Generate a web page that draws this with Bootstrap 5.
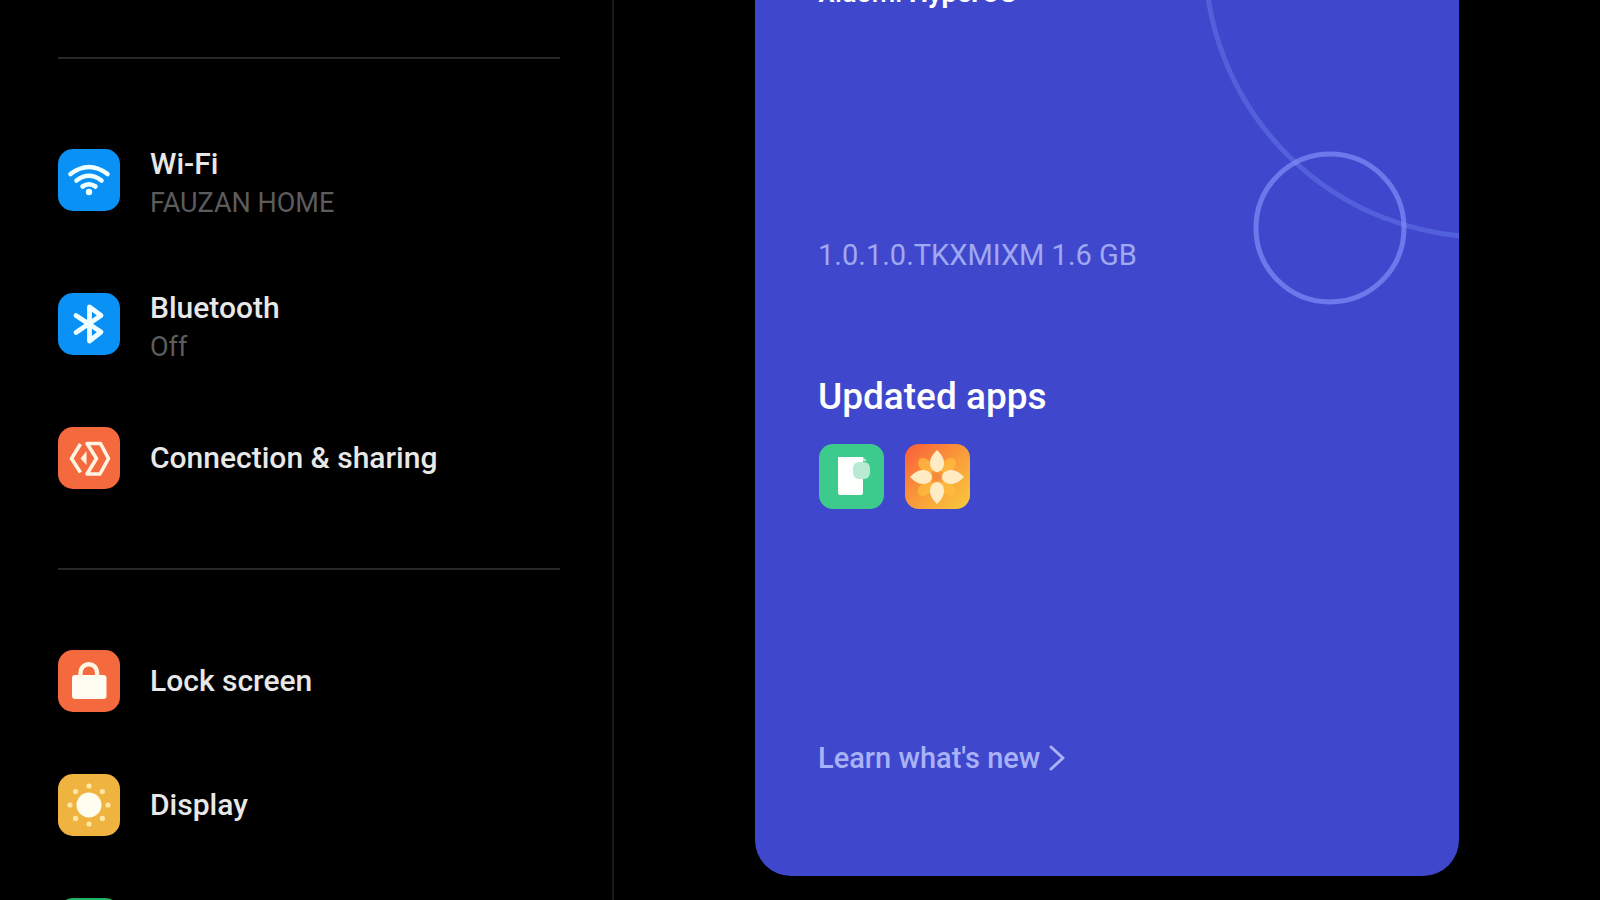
<!DOCTYPE html>
<html lang="en">
<head>
<meta charset="utf-8">
<meta name="viewport" content="width=device-width, initial-scale=1">
<title>Settings</title>
<link href="https://cdn.jsdelivr.net/npm/bootstrap@5.3.0/dist/css/bootstrap.min.css" rel="stylesheet">
<style>
  body { background: #000; font-family: Roboto, "Liberation Sans", sans-serif; }
  .settings-page { display: grid; grid-template-columns: 307fr 493fr; height: 100vh; overflow: hidden; }
  .side-menu { border-right: 2px solid #191919; padding: 57px 52px 0 58px; min-width: 0; }
  .menu-rule { margin: 0; border: 0; height: 2px; background: #272727; opacity: 1; }
  .menu-group { padding: 49px 0 48px; }
  .menu-item { gap: 30px; padding: 31px 0; color: #e8e8e8; font-size: 30px; font-weight: 500; line-height: 42px; text-decoration: none; }
  .menu-item svg { width: 62px; height: 62px; flex: none; }
  .menu-note { color: #5c5c5c; font-size: 27px; font-weight: 400; line-height: 36px; }
  .two-line { padding-top: 4px; }
  .detail-pane { padding: 0 141px 24px; min-width: 0; }
  .update-card { background: #3f48cc; border-radius: 0 0 36px 36px; padding: 0 63px 100px; color: #fff; overflow: hidden; }
  .rings { top: 0; right: 0; width: 260px; height: 320px; }
  .os-name { font-size: 27px; line-height: 36px; font-weight: 500; margin: -25px 0 226px; }
  .os-name b { font-weight: 700; }
  .build { color: #a0a8f2; font-size: 29px; line-height: 36px; margin: 0 0 101px; }
  .apps-title { font-size: 37px; line-height: 46px; font-weight: 500; margin: 0 0 24px; }
  .app-list { gap: 20px; margin-bottom: 230px; }
  .app-list svg { width: 66px; height: 66px; }
  .news-link { color: #a9b2f6; font-size: 29px; line-height: 36px; font-weight: 500; gap: 8px; }
  .news-link svg { width: 18px; height: 28px; }
</style>
</head>
<body>
<div class="settings-page">
  <nav class="side-menu" aria-label="Settings">
    <hr class="menu-rule">
    <div class="menu-group">
      <a class="menu-item d-flex align-items-center" href="#wifi">
        <svg viewBox="0 0 62 62" aria-hidden="true"><rect width="62" height="62" rx="15" fill="#0a91f5"/>
          <g fill="none" stroke="#f0ffff" stroke-width="4.6" stroke-linecap="round"><path d="M12.5 25Q31 11 49.500 25"/><path d="M18.500 31.500Q31 22 43.500 31.500"/><path d="M24.500 37.500Q31 33 37.500 37.500"/></g>
          <circle cx="31" cy="43" r="3.200" fill="#f0ffff"/></svg>
        <span class="two-line"><span class="d-block">Wi-Fi</span><span class="menu-note d-block">FAUZAN HOME</span></span>
      </a>
      <a class="menu-item d-flex align-items-center" href="#bluetooth">
        <svg viewBox="0 0 62 62" aria-hidden="true"><rect width="62" height="62" rx="15" fill="#0a91f5"/>
          <path d="M18 22.500L43 39 31.500 48V14L43 22.500 18 39.500" fill="none" stroke="#f0ffff" stroke-width="4.800" stroke-linecap="round" stroke-linejoin="round"/></svg>
        <span class="two-line"><span class="d-block">Bluetooth</span><span class="menu-note d-block">Off</span></span>
      </a>
      <a class="menu-item d-flex align-items-center" href="#sharing">
        <svg viewBox="0 0 62 62" aria-hidden="true"><rect width="62" height="62" rx="15" fill="#f5693e"/>
          <g fill="none" stroke="#fff3e2" stroke-width="3.600" stroke-linejoin="round"><path d="M22.500 17L13.500 31.500 22.500 45.500"/><path d="M29 16.500H42.500L50.500 31.500 42 47H29L38.500 31.500Z"/></g>
          <path d="M22.500 31.500L28.500 24V38Z" fill="#fff3e2"/></svg>
        <span>Connection &amp; sharing</span>
      </a>
    </div>
    <hr class="menu-rule">
    <div class="menu-group">
      <a class="menu-item d-flex align-items-center" href="#lock">
        <svg viewBox="0 0 62 62" aria-hidden="true"><rect width="62" height="62" rx="15" fill="#f5693e"/>
          <rect x="14" y="25" width="34.500" height="24" rx="3" fill="#fffdf2"/><path d="M22.500 27V22.500a8.300 8.300 0 0 1 16.600 0V27" fill="none" stroke="#fff3e2" stroke-width="4.400"/></svg>
        <span>Lock screen</span>
      </a>
      <a class="menu-item d-flex align-items-center" href="#display">
        <svg viewBox="0 0 62 62" aria-hidden="true"><rect width="62" height="62" rx="15" fill="#efb440"/>
          <circle cx="31" cy="31" r="12.500" fill="#fffdf0"/>
          <g fill="#ffe7a6"><circle cx="31" cy="12" r="2.600"/><circle cx="31" cy="50" r="2.600"/><circle cx="12" cy="31" r="2.600"/><circle cx="50" cy="31" r="2.600"/><circle cx="17.600" cy="17.600" r="2.600"/><circle cx="44.400" cy="17.600" r="2.600"/><circle cx="17.600" cy="44.400" r="2.600"/><circle cx="44.400" cy="44.400" r="2.600"/></g></svg>
        <span>Display</span>
      </a>
      <a class="menu-item d-flex align-items-center" href="#more">
        <svg viewBox="0 0 62 62" aria-hidden="true"><rect width="62" height="62" rx="15" fill="#1fb565"/></svg>
      </a>
    </div>
  </nav>

  <main class="detail-pane">
    <section class="update-card d-flex flex-column position-relative">
      <svg class="rings position-absolute" viewBox="0 0 260 320" fill="none" stroke-width="5" aria-hidden="true">
        <circle cx="287" cy="-44" r="281" stroke="#5360dc"/>
        <circle cx="131" cy="228" r="74" stroke="#8d98ff" stroke-opacity=".6"/>
      </svg>
      <h1 class="os-name">Xiaomi <b>HyperOS</b></h1>
      <p class="build">1.0.1.0.TKXMIXM 1.6 GB</p>
      <h2 class="apps-title">Updated apps</h2>
      <div class="app-list d-flex">
        <svg viewBox="0 0 66 66" role="img" aria-label="Notes"><rect x="1" width="65" height="65" rx="14" fill="#3ccb8c"/>
          <path d="M20 13H45V49q0 2-2 2H22q-2 0-2-2Z" fill="#fdfffc"/><path d="M45 13v4h4Z" fill="#b5ecd2"/><rect x="35" y="18" width="17" height="17" rx="6" fill="#b9ead4"/></svg>
        <svg viewBox="0 0 66 66" role="img" aria-label="Gallery">
          <defs><linearGradient id="warm" x1="0" y1="0" x2="1" y2="1"><stop offset="0" stop-color="#fa5c38"/><stop offset=".5" stop-color="#f99a3a"/><stop offset="1" stop-color="#f9cb3c"/></linearGradient></defs>
          <rect x="1" width="65" height="65" rx="14" fill="url(#warm)"/>
          <g fill="#ffbd3f" opacity=".75"><ellipse cx="33" cy="17" rx="6" ry="9" transform="rotate(45 33 33)"/><ellipse cx="33" cy="17" rx="6" ry="9" transform="rotate(135 33 33)"/><ellipse cx="33" cy="17" rx="6" ry="9" transform="rotate(225 33 33)"/><ellipse cx="33" cy="17" rx="6" ry="9" transform="rotate(315 33 33)"/></g>
          <g fill="#ffecc5"><path id="petal" d="M33 6C37 10 40 14 40 19 40 24 37 28 33 28S26 24 26 19C26 14 29 10 33 6Z"/><use href="#petal" transform="rotate(90 33 33)"/><use href="#petal" transform="rotate(180 33 33)"/><use href="#petal" transform="rotate(270 33 33)"/></g>
          <circle cx="33" cy="33" r="4" fill="#f58a3c"/></svg>
      </div>
      <a class="news-link d-inline-flex align-items-center text-decoration-none align-self-start" href="#news">Learn what's new
        <svg viewBox="0 0 18 28" fill="none" stroke="currentColor" stroke-width="3" stroke-linecap="round" stroke-linejoin="round" aria-hidden="true"><path d="M3 3L15 14 3 25"/></svg></a>
    </section>
  </main>
</div>
<script src="https://cdn.jsdelivr.net/npm/bootstrap@5.3.0/dist/js/bootstrap.bundle.min.js"></script>
</body>
</html>
